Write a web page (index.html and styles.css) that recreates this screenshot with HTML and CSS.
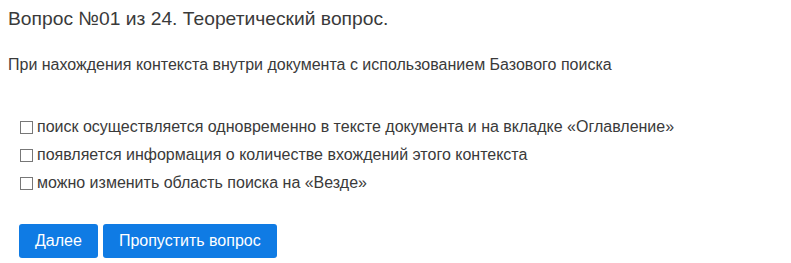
FILE: index.html
```html
<html lang="ru">
<head>
    <meta charset="UTF-8">
    <meta name="viewport" content="width=device-width, initial-scale=1.0">
    <title>Тест</title>
    <link rel="stylesheet" href="styles.css">
</head>
<body>
<div class="quiz">
  <div class="question-title">Вопрос №01 из 24. Теоретический вопрос.</div>
  <div class="question-text">При нахождения контекста внутри документа с использованием Базового поиска</div>

  <div class="answers">
    <label class="answer"><span class="box"></span>поиск осуществляется одновременно в тексте документа и на вкладке «Оглавление»</label>
    <label class="answer"><span class="box"></span>появляется информация о количестве вхождений этого контекста</label>
    <label class="answer"><span class="box"></span>можно изменить область поиска на «Везде»</label>
  </div>

  <div class="buttons">
    <button class="btn">Далее</button>
    <button class="btn">Пропустить вопрос</button>
  </div>
</div>
</body>
</html>
```

FILE: styles.css
```css
body {
    margin: 0;
    font-family: "Liberation Sans", Arial, sans-serif;
    background-color: #fff;
    color: #3a3a3a;
}

.quiz {
    padding: 6px 8px;
}

.question-title {
    font-size: 19.25px;
    line-height: 26px;
}

.question-text {
    margin-top: 23px;
    font-size: 16px;
    line-height: 20px;
}

.answers {
    margin-top: 38px;
    padding-left: 12px;
}

.answer {
    display: flex;
    align-items: center;
    font-size: 16px;
    line-height: 28px;
}

.box {
    width: 11px;
    height: 11px;
    border: 1px solid #777;
    margin-right: 4px;
    margin-top: 1px;
}

.buttons {
    display: flex;
    gap: 5px;
    margin-top: 27px;
    padding-left: 11px;
}

.btn {
    border: none;
    outline: none;
    height: 34px;
    padding: 0 16px;
    border-radius: 3px;
    background-color: #0f7be4;
    color: white;
    font-family: "Liberation Sans", Arial, sans-serif;
    font-size: 16px;
    cursor: pointer;
}
```
